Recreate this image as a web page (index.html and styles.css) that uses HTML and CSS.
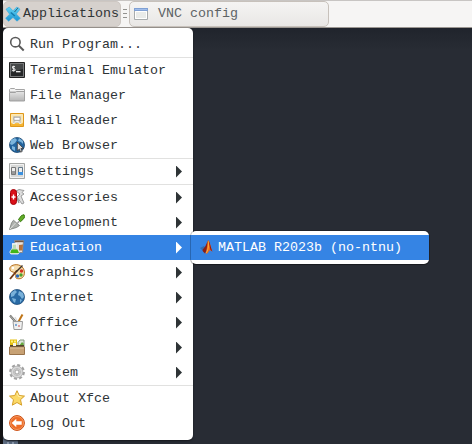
FILE: index.html
```html
<!DOCTYPE html>
<html lang="en">
<head>
<meta charset="utf-8">
<title>Desktop</title>
<link rel="stylesheet" href="styles.css">
</head>
<body>
<div class="desktop">
  <header class="panel">
    <div class="app-button">
      <svg class="icon" viewBox="0 0 16 16"><defs><linearGradient id="xb" x1="0" y1="0" x2="0" y2="1"><stop offset="0" stop-color="#62d5f5"/><stop offset="1" stop-color="#1a93d2"/></linearGradient></defs><path d="M1 3.2 4.3 1 8 4.8 11.8 1 15 3.2 11.3 8 15.4 12.3 12 15.2 8 11.4 3.6 15.2.6 12.3 4.6 8.2Z" fill="url(#xb)" stroke="#38aadd" stroke-width=".6"/><path d="m5.8 6.5 4 3.5" stroke="#147cae" stroke-width="1.6"/><path d="m13 1.8-3.5 4.2" stroke="#24465a" stroke-width=".8"/></svg>
      <span>Applications</span>
    </div>
    <div class="handle"><i></i><i></i><i></i></div>
    <div class="task">
      <svg class="task-icon" viewBox="0 0 14 12"><path d="M.5.5h13v11H.5z" fill="#e9ebe9" stroke="#a7abac"/><path d="M0 0h14v3H0z" fill="#7fa0d4"/><path d="M1 1h12v1H1z" fill="#a0bdea"/><path d="M1.5 3.5h11v7h-11z" fill="none" stroke="#fff"/></svg>
      <span>VNC config</span>
    </div>
  </header>
  <nav class="menu">
    <div class="item"><svg class="icon" viewBox="0 0 16 16"><circle cx="6.4" cy="6.2" r="4.7" fill="none" stroke="#5a5a5a" stroke-width="1.6"/><path d="m9.7 9.5 5 5" stroke="#5a5a5a" stroke-width="2"/></svg><span>Run Program...</span></div>
    <hr>
    <div class="item"><svg class="icon" viewBox="0 0 16 16"><path d="M.5.5h15v15H.5z" fill="#77797a" stroke="#222"/><path d="M2 2h12v12H2z" fill="#252728"/><path d="M2 2h12v5L2 10z" fill="#444748"/><path d="M6 4.5H3.5v1.7L6 7v1.6H3M4.7 3.7v6" fill="none" stroke="#eee" stroke-width=".9"/><path d="M7 9.7h4.5" stroke="#fff" stroke-width="1.2"/></svg><span>Terminal Emulator</span></div>
    <div class="item"><svg class="icon" viewBox="0 0 16 16"><defs><linearGradient id="fg" x1="0" y1="0" x2="0" y2="1"><stop offset="0" stop-color="#e5e5e5"/><stop offset="1" stop-color="#b4b4b4"/></linearGradient></defs><path d="M.5 5V2.5l1-1h4l1 1h9V5z" fill="#f2f2f2" stroke="#a5a5a5"/><path d="M.5 5.5h6l1-1h8v9.5H.5z" fill="url(#fg)" stroke="#9a9a9a" stroke-width=".9"/></svg><span>File Manager</span></div>
    <div class="item"><svg class="icon" viewBox="0 0 16 16"><path d="M1.5 1.5h13v13h-13z" fill="#f8c14b" stroke="#df981c"/><path d="M2.5 2.5h11v8h-11z" fill="#fbe6ae" stroke="#fde9b5"/><path d="M4 4h8v7H4z" fill="#d5ceba"/><path d="M5 5.3h6v3H5z" fill="#fff" stroke="#888" stroke-width=".6"/><path d="M3.5 11.5h2l1-2h3l1 2h2" fill="none" stroke="#eee"/><path d="M2 12h12v2H2z" fill="#f5b431"/></svg><span>Mail Reader</span></div>
    <div class="item"><svg class="icon" viewBox="0 0 16 16"><circle cx="8" cy="8" r="7.5" fill="#23659f" stroke="#1a466f" stroke-width=".8"/><path d="M2 3 6 1l2 2-2 3-3 2-2-1zM10 1l4 3v3l-2-2-3-1zM3 9l3 1v4L3 12z" fill="#7cb5dc"/><path d="M8.3 5v9l2-1.8 1.3 3 1.6-.8-1.3-2.8h2.6z" fill="#ddd" stroke="#333" stroke-width=".8"/></svg><span>Web Browser</span></div>
    <hr>
    <div class="item sub"><svg class="icon" viewBox="0 0 16 16"><path d="M.5.5h15v15H.5z" fill="#d7d8d7" stroke="#a5a7a5"/><path d="M1.5 1.5h13v13h-13z" fill="none" stroke="#f3f3f3"/><path d="M2.5 4.5h4v7h-4z" fill="#eee" stroke="#777"/><path d="M3 8h3v3H3z" fill="#999"/><path d="M9.5 4.5h4v7h-4z" fill="#eee" stroke="#657989"/><path d="M9 9h5v3H9z" fill="#3b91df"/></svg><span>Settings</span></div>
    <hr>
    <div class="item sub"><svg class="icon" viewBox="0 0 16 16"><path d="m7 2 3-1.5 5 1-2 2 2 1.5-3 2 3 7-2 1-5-7 3-3z" fill="#ddd" stroke="#888" stroke-width=".8"/><path d="m8 9 2 5" stroke="#999" stroke-width="1.5"/><rect x="1.5" y=".5" width="6" height="15" rx="3" fill="#d91018" stroke="#a40006"/><path d="M4.5 5.5v5M2.5 8h4" stroke="#fff" stroke-width="1.4"/></svg><span>Accessories</span></div>
    <div class="item sub"><svg class="icon" viewBox="0 0 16 16"><path d="m9.5 5.5 3-4L15 .7l.7 2-1 2-3.2 3z" fill="#63ad28" stroke="#36790f"/><path d="m8.5 9 2-2" stroke="#999" stroke-width="1.5"/><path d="m4.5 6.2 6 5.3-3 2L.5 15.5 2.5 9z" fill="#aeb1ad" stroke="#777b77" stroke-width=".8"/><path d="m1 15 5.5-6" stroke="#dedfdc"/></svg><span>Development</span></div>
    <div class="item sub active"><svg class="icon" viewBox="0 0 16 16"><path d="m5.5 1.5 9 0-1 12h-6z" fill="#e8e4df" stroke="#88827d" stroke-width=".8"/><path d="M6 2.5h8.5" stroke="#735642" stroke-width="1.4"/><path d="m10 6 4-.5-.5 6H10z" fill="#b5713a"/><path d="M3.5 5v4L.8 13l1 2h7.4l1-2-2.7-4V5z" fill="#bfdcb6" stroke="#eee" stroke-width=".9"/><path d="M2.5 10.5h6L10 14H1.3z" fill="#42b51b"/><path d="M3 4.8h5" stroke="#fff"/></svg><span>Education</span></div>
    <div class="item sub"><svg class="icon" viewBox="0 0 16 16"><path d="M4 1.2C9-.5 15 2 15.4 8c.3 5-3 7.5-7 6.6C5 14 8 11 6 9 4 7.5.8 8 .8 5c0-2 1-3 3.2-3.8z" fill="#f6ddae" stroke="#b56c18"/><path d="M8 6.5 1 15" stroke="#743b18" stroke-width="1.9"/><path d="m7 8 6.5-6.5" stroke="#3e3226" stroke-width="1.4"/><circle cx="4" cy="4" r="1.2" fill="#fff"/><circle cx="12.5" cy="7" r="1.7" fill="#d63020"/><circle cx="12" cy="11" r="1.7" fill="#4ba128"/><circle cx="8.5" cy="12" r="1.7" fill="#2967bb"/></svg><span>Graphics</span></div>
    <div class="item sub"><svg class="icon" viewBox="0 0 16 16"><circle cx="8" cy="8" r="7.5" fill="#286aa5" stroke="#204d78" stroke-width=".8"/><path d="m2 4 4-3 2 2-2 2-1 2-3 1zM10 2l4 2 1 4-2 2-2-3-2-1zM3 9l4 1-1 4-2-2zM11 10l2 1-2 3z" fill="#79b1da"/></svg><span>Internet</span></div>
    <div class="item sub"><svg class="icon" viewBox="0 0 16 16"><path d="m1 1.5 7 8" stroke="#74746f" stroke-width="2.2"/><path d="m1.5 2 6 7" stroke="#ccc" stroke-width=".7"/><path d="m13.5.5-5 9" stroke="#bf7518" stroke-width="2"/><path d="m6 3 3 6" stroke="#ddd" stroke-width="1.4"/><path d="M4 7.5h9.5l-.7 8H5z" fill="#eee" fill-opacity=".9" stroke="#999"/><path d="M6 10h2v2H6z" fill="#82a9d5"/><path d="M9 11h2v2H9z" fill="#e1a1a1"/></svg><span>Office</span></div>
    <div class="item sub"><svg class="icon" viewBox="0 0 16 16"><path d="M1 .5h7v7H1z" fill="#e4c114"/><path d="M2 1.5h2v2H2zM5 1.5h2v2H5z" fill="#fff17a"/><path d="M9 3.5 11 1h4v7H9z" fill="#dfe5dc" stroke="#879980"/><path d="m10 7 3-4 2 2-2 3z" fill="#65aa3c"/><path d="M1 6h14v3H1z" fill="#54452c"/><path d="M4 4h3v3H4z" fill="#f8f6e8"/><path d="M.5 8h15v7.5H.5z" fill="#c7a174" stroke="#98734b"/><path d="M1 9h14" stroke="#e0c49d"/></svg><span>Other</span></div>
    <div class="item sub"><svg class="icon" viewBox="0 0 16 16"><circle cx="8" cy="8" r="6.7" fill="none" stroke="#a2a2a2" stroke-width="2.4" stroke-dasharray="3 2.26"/><circle cx="8" cy="8" r="5.9" fill="#d8d8d8" stroke="#a6a6a6" stroke-width=".7"/><circle cx="8" cy="8" r="3.5" fill="none" stroke="#bbb"/><circle cx="8" cy="8" r="2" fill="#fff" stroke="#909090" stroke-width=".8"/></svg><span>System</span></div>
    <hr>
    <div class="item"><svg class="icon" viewBox="0 0 16 16"><path d="m8 .7 2.2 4.8 5.3.6-4 3.6 1.2 5.5L8 12.5l-4.7 2.7 1.2-5.5-4-3.6 5.3-.6z" fill="#fbd967" stroke="#d6a02a" stroke-linejoin="round"/><path d="m8 3 1.5 3.5 3 .4" fill="none" stroke="#fff0ad"/></svg><span>About Xfce</span></div>
    <div class="item"><svg class="icon" viewBox="0 0 16 16"><circle cx="8" cy="8" r="7.4" fill="#ee6c27" stroke="#c94c10"/><circle cx="8" cy="8" r="6.5" fill="none" stroke="#f6a36f" stroke-width=".8"/><path d="M2.7 8 7.3 3.8v2.5h5.4v3.4H7.3v2.5z" fill="#fff"/></svg><span>Log Out</span></div>
  </nav>
  <div class="menu submenu">
    <div class="item active"><svg class="icon" viewBox="0 0 16 16"><path d="m2 9 4-2 2 3-3 2z" fill="#376caa"/><path d="m4.5 11 3-4L10.2 1 10 8l-3 6.5-2-2z" fill="#8c1f15"/><path d="M10.2 1c1.8 2 2.6 7.2 4.3 12-2-2-3-2-4.3.5-1 1.2-1.6 1.5-2.5 1.2C9 11 9 5 10.2 1z" fill="#ee671e"/><path d="M10.2 2c.5 4 .4 8-1.8 12" fill="none" stroke="#ffc33c" stroke-width=".8"/><path d="M10.6 1.5c1.8 3 2 7 3.8 11l-2-1.8z" fill="#98160c"/></svg><span>MATLAB R2023b (no-ntnu)</span></div>
  </div>
  <div class="tab"><i></i><i></i></div>
</div>
</body>
</html>
```
FILE: styles.css
```css
* { box-sizing: border-box; }
body { margin: 0; }
.desktop {
  position: relative;
  isolation: isolate;
  width: 472px;
  height: 444px;
  overflow: hidden;
  padding-left: 3px;
  background: linear-gradient(90deg, #121214 3px, transparent 3px), linear-gradient(#20242c 28px, #282c34 50px);
  font: 13.333px/25px "Liberation Mono", monospace;
  color: #2e3436;
}
span { white-space: pre; }
.panel {
  display: flex;
  height: 28px;
  padding-top: 1px;
  border-bottom: 1px solid #9b9691;
  background: linear-gradient(#c8c5c3 1px, #f6f5f4 1px);
}
.app-button {
  display: flex;
  align-items: center;
  gap: 2px;
  width: 118px;
  height: 26px;
  padding: 0 0 1px 1px;
  border: 1px solid #cdc7c2;
  border-radius: 5px;
  background: #d6d1cd;
}
.handle {
  display: flex;
  flex-direction: column;
  gap: 3px;
  width: 4px;
  margin: 8px 2px 0;
}
.handle i { height: 1px; background: #92928f; }
.task {
  display: flex;
  align-items: center;
  gap: 10px;
  width: 200px;
  height: 26px;
  padding: 0 0 1px 4px;
  border: 1px solid #c7c1bb;
  border-radius: 5px;
  background: linear-gradient(#f5f4f3, #e9e7e5);
  color: #5d6365;
}
.icon { flex: none; width: 16px; height: 16px; }
.task-icon { flex: none; width: 14px; height: 12px; margin-top: 1px; }
.menu {
  width: 190px;
  padding: 4px 0;
  border-radius: 5px;
  background: #fff;
  box-shadow: 0 1px 2px #16181d;
}
.menu hr { height: 1px; margin: 0; border: 0; background: #e1e1e0; }
.item {
  display: flex;
  align-items: center;
  gap: 5px;
  height: 25px;
  padding: 0 11px 0 6px;
}
.item .icon { margin-bottom: 1px; }
.sub::after {
  content: "";
  width: 6px;
  height: 12px;
  margin-left: auto;
  background: currentColor;
  clip-path: polygon(0 0, 100% 50%, 0 100%);
}
.active { background: #3584e4; color: #fff; }
.submenu {
  position: absolute;
  left: 191px;
  top: 231px;
  width: 238px;
  box-shadow: 0 0 0 1px #00000033, 0 1px 1px #00000040;
}
.submenu .item { padding-left: 7px; gap: 4px; }
.tab {
  position: absolute;
  left: 3px;
  top: 437px;
  z-index: -1;
  display: flex;
  gap: 3px;
  width: 15px;
  height: 9px;
  padding: 5px 0 0 4px;
  border-radius: 0 5px 0 0;
  background: #5c6b80;
}
.tab i { width: 2px; height: 2px; background: #8997ab; }
```
